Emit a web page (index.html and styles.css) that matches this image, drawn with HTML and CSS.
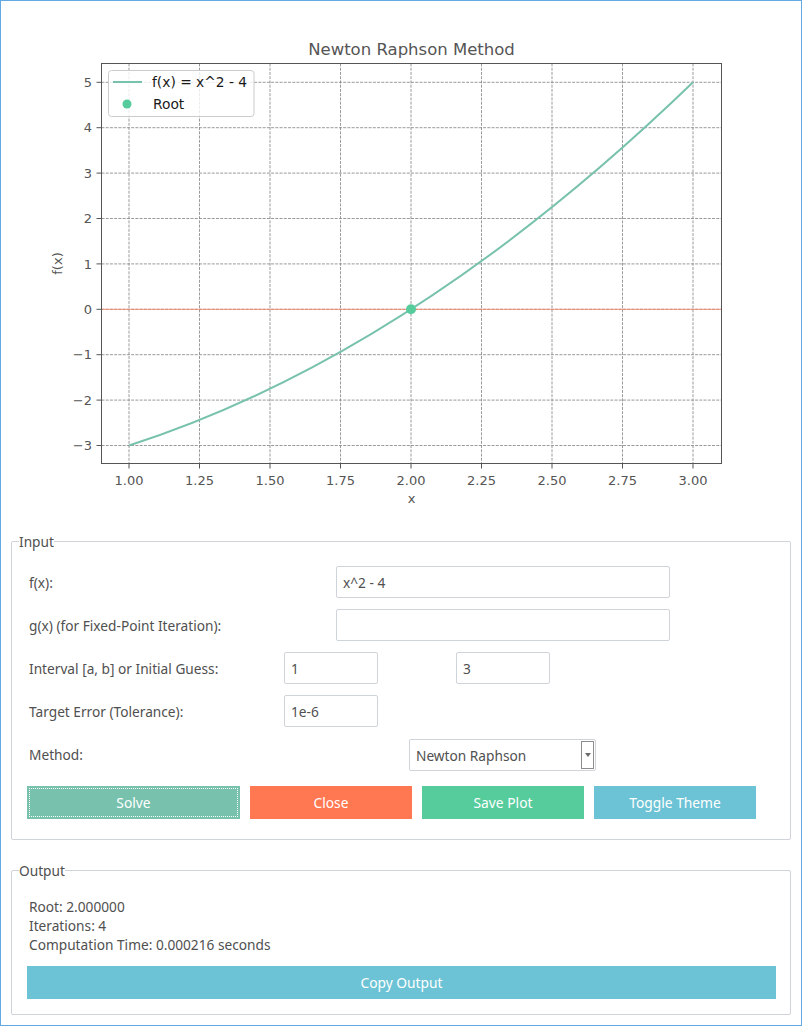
FILE: index.html
```html
<!DOCTYPE html>
<html lang="en">
<head>
<meta charset="utf-8">
<title>Newton Raphson Method</title>
<link rel="stylesheet" href="styles.css">
</head>
<body>
<div class="window">
  <svg class="plot" width="800" height="532" viewBox="1 1 800 532" xmlns="http://www.w3.org/2000/svg">
    <g class="grid">
      <line x1="129" y1="63.5" x2="129" y2="463.5"/>
      <line x1="199.5" y1="63.5" x2="199.5" y2="463.5"/>
      <line x1="270" y1="63.5" x2="270" y2="463.5"/>
      <line x1="340.5" y1="63.5" x2="340.5" y2="463.5"/>
      <line x1="411" y1="63.5" x2="411" y2="463.5"/>
      <line x1="481.5" y1="63.5" x2="481.5" y2="463.5"/>
      <line x1="552" y1="63.5" x2="552" y2="463.5"/>
      <line x1="622.5" y1="63.5" x2="622.5" y2="463.5"/>
      <line x1="693" y1="63.5" x2="693" y2="463.5"/>
      <line x1="101.5" y1="82.3" x2="721.5" y2="82.3"/>
      <line x1="101.5" y1="127.7" x2="721.5" y2="127.7"/>
      <line x1="101.5" y1="173.1" x2="721.5" y2="173.1"/>
      <line x1="101.5" y1="218.5" x2="721.5" y2="218.5"/>
      <line x1="101.5" y1="263.9" x2="721.5" y2="263.9"/>
      <line x1="101.5" y1="309.3" x2="721.5" y2="309.3"/>
      <line x1="101.5" y1="354.7" x2="721.5" y2="354.7"/>
      <line x1="101.5" y1="400.1" x2="721.5" y2="400.1"/>
      <line x1="101.5" y1="445.5" x2="721.5" y2="445.5"/>
    </g>
    <line class="zero-line" x1="101.5" y1="309.3" x2="721.5" y2="309.3"/>
    <path class="curve" d="M129 445.5 Q411 354.7 693 82.3"/>
    <circle class="root-dot" cx="411" cy="309.3" r="5"/>
    <rect class="spines" x="101.5" y="63.5" width="620" height="400"/>
    <g class="ticks">
      <line x1="96.5" y1="82.3" x2="101" y2="82.3"/>
      <line x1="96.5" y1="127.7" x2="101" y2="127.7"/>
      <line x1="96.5" y1="173.1" x2="101" y2="173.1"/>
      <line x1="96.5" y1="218.5" x2="101" y2="218.5"/>
      <line x1="96.5" y1="263.9" x2="101" y2="263.9"/>
      <line x1="96.5" y1="309.3" x2="101" y2="309.3"/>
      <line x1="96.5" y1="354.7" x2="101" y2="354.7"/>
      <line x1="96.5" y1="400.1" x2="101" y2="400.1"/>
      <line x1="96.5" y1="445.5" x2="101" y2="445.5"/>
      <line x1="129" y1="464" x2="129" y2="468.5"/>
      <line x1="199.5" y1="464" x2="199.5" y2="468.5"/>
      <line x1="270" y1="464" x2="270" y2="468.5"/>
      <line x1="340.5" y1="464" x2="340.5" y2="468.5"/>
      <line x1="411" y1="464" x2="411" y2="468.5"/>
      <line x1="481.5" y1="464" x2="481.5" y2="468.5"/>
      <line x1="552" y1="464" x2="552" y2="468.5"/>
      <line x1="622.5" y1="464" x2="622.5" y2="468.5"/>
      <line x1="693" y1="464" x2="693" y2="468.5"/>
    </g>
    <g class="ytick-labels">
      <text x="92" y="87">5</text>
      <text x="92" y="132.4">4</text>
      <text x="92" y="177.8">3</text>
      <text x="92" y="223.2">2</text>
      <text x="92" y="268.6">1</text>
      <text x="92" y="314">0</text>
      <text x="92" y="359.4">−1</text>
      <text x="92" y="404.8">−2</text>
      <text x="92" y="450.2">−3</text>
    </g>
    <g class="xtick-labels">
      <text x="129" y="485">1.00</text>
      <text x="199.5" y="485">1.25</text>
      <text x="270" y="485">1.50</text>
      <text x="340.5" y="485">1.75</text>
      <text x="411" y="485">2.00</text>
      <text x="481.5" y="485">2.25</text>
      <text x="552" y="485">2.50</text>
      <text x="622.5" y="485">2.75</text>
      <text x="693" y="485">3.00</text>
    </g>
    <text class="plot-title" x="411.5" y="55">Newton Raphson Method</text>
    <text class="axis-label" x="411.5" y="502.5">x</text>
    <text class="axis-label" transform="translate(62 263.5) rotate(-90)">f(x)</text>
    <g class="legend">
      <rect class="legend-box" x="108.5" y="70.5" width="145.5" height="46" rx="3"/>
      <line class="curve" x1="113" y1="82" x2="142" y2="82"/>
      <circle class="root-dot" cx="127" cy="104" r="4.5"/>
      <text x="152" y="87">f(x) = x^2 - 4</text>
      <text x="153" y="108.5">Root</text>
    </g>
  </svg>

  <div class="panels">
    <fieldset class="group group-input">
      <legend>Input</legend>
      <div class="form-grid">
        <label class="lbl" for="fx">f(x):</label>
        <input class="field span-wide" id="fx" type="text" value="x^2 - 4">

        <label class="lbl" for="gx">g(x) (for Fixed-Point Iteration):</label>
        <input class="field span-wide" id="gx" type="text" value="">

        <label class="lbl" for="ia">Interval [a, b] or Initial Guess:</label>
        <input class="field span-short" id="ia" type="text" value="1">
        <input class="field span-b" id="ib" type="text" value="3">

        <label class="lbl" for="tol">Target Error (Tolerance):</label>
        <input class="field span-short" id="tol" type="text" value="1e-6">

        <label class="lbl">Method:</label>
        <div class="combo span-combo">
          <span class="combo-text">Newton Raphson</span>
          <span class="combo-arrow"><span class="tri"></span></span>
        </div>
      </div>
      <div class="button-row">
        <button class="btn btn-primary btn-solve">Solve</button>
        <button class="btn btn-danger">Close</button>
        <button class="btn btn-success">Save Plot</button>
        <button class="btn btn-info">Toggle Theme</button>
      </div>
    </fieldset>

    <fieldset class="group group-output">
      <legend>Output</legend>
      <div class="out-text">
        <div>Root: 2.000000</div>
        <div>Iterations: 4</div>
        <div>Computation Time: 0.000216 seconds</div>
      </div>
      <button class="btn btn-info btn-full">Copy Output</button>
    </fieldset>
  </div>
</div>
</body>
</html>
```

FILE: styles.css
```css
html, body {
  margin: 0;
  padding: 0;
  background: #ffffff;
}

.window {
  width: 802px;
  height: 1026px;
  box-sizing: border-box;
  border: 1px solid #63a9e4;
  background: #ffffff;
  display: flex;
  flex-direction: column;
  font-family: "Noto Sans", "Open Sans", sans-serif;
  font-size: 13.7px;
  color: #505050;
}

/* ---------- plot ---------- */
.plot {
  display: block;
  flex: none;
  font-family: "DejaVu Sans", sans-serif;
}

.grid line {
  stroke: #808080;
  stroke-width: 0.8;
  stroke-dasharray: 2.96 1.28;
}

.zero-line {
  stroke: #ff7851;
  stroke-width: 0.8;
  stroke-opacity: 0.9;
}

.curve {
  fill: none;
  stroke: #78c2ad;
  stroke-width: 2;
}

.root-dot {
  fill: #56cc9d;
}

.spines {
  fill: none;
  stroke: #555555;
  stroke-width: 1;
}

.ticks line {
  stroke: #555555;
  stroke-width: 1;
}

.ytick-labels text {
  font-size: 13px;
  fill: #555555;
  text-anchor: end;
}

.xtick-labels text {
  font-size: 13px;
  fill: #555555;
  text-anchor: middle;
}

.plot-title {
  font-size: 16.5px;
  fill: #555555;
  text-anchor: middle;
}

.axis-label {
  font-size: 13px;
  fill: #555555;
  text-anchor: middle;
}

.legend-box {
  fill: #ffffff;
  fill-opacity: 0.8;
  stroke: #cccccc;
  stroke-width: 1;
}

.legend text {
  font-size: 13.8px;
  fill: #1a1a1a;
}

/* ---------- panels ---------- */
.panels {
  display: flex;
  flex-direction: column;
  gap: 22px;
  padding: 0 10px;
}

.group {
  margin: 0;
  border: 1px solid #cfd3da;
  border-radius: 2px;
  padding: 16px 14px 20px 15px;
  min-width: 0;
}

.group legend {
  padding: 0;
  margin-left: -8px;
  line-height: 17px;
  color: #505050;
}

.form-grid {
  display: grid;
  grid-template-columns: 257px 52px 42px 31px 47px 94px 46px 74px;
  grid-auto-rows: 32px;
  row-gap: 11px;
  align-items: center;
}

.lbl {
  grid-column: 1;
  padding-left: 2px;
  white-space: nowrap;
  color: #505050;
}

.field {
  box-sizing: border-box;
  height: 32px;
  width: 100%;
  margin: 0;
  border: 1px solid #ced4da;
  border-radius: 2px;
  padding: 0 6px;
  font-family: "Noto Sans", "Open Sans", sans-serif;
  font-size: 13.7px;
  color: #505050;
  background: #ffffff;
  outline: none;
}

.span-wide { grid-column: 3 / 9; }
.span-short { grid-column: 2 / 4; }
.span-b { grid-column: 6 / 7; }
.span-combo { grid-column: 5 / 8; }

.combo {
  box-sizing: border-box;
  height: 32px;
  border: 1px solid #ced4da;
  border-radius: 2px;
  display: flex;
  align-items: center;
  justify-content: space-between;
  padding: 1px 1px 1px 6px;
  align-self: start;
  margin-top: 1px;
}

.combo-arrow {
  box-sizing: border-box;
  width: 13px;
  height: 28px;
  border: 1px solid #8c8c8c;
  display: flex;
  align-items: center;
  justify-content: center;
  background: #ffffff;
}

.tri {
  width: 0;
  height: 0;
  border-left: 3.5px solid transparent;
  border-right: 3.5px solid transparent;
  border-top: 4px solid #6b6b6b;
}

.button-row {
  display: flex;
  gap: 10px;
  margin-top: 16px;
}

.btn {
  box-sizing: border-box;
  height: 33px;
  width: 162px;
  border: none;
  border-radius: 0;
  margin: 0;
  padding: 0;
  font-family: "Noto Sans", "Open Sans", sans-serif;
  font-size: 13.8px;
  color: #ffffff;
  cursor: pointer;
}

.btn-solve {
  width: 213px;
  outline: 1px dotted #ffffff;
  outline-offset: -3px;
}

.btn-primary { background: #78c2ad; }
.btn-danger { background: #ff7851; }
.btn-success { background: #56cc9d; }
.btn-info { background: #6cc3d5; }

.group-output {
  padding: 18px 14px 15px 15px;
}

.out-text {
  line-height: 19px;
  padding-left: 2px;
}

.btn-full {
  display: block;
  width: 100%;
  margin-top: 12px;
}
```
